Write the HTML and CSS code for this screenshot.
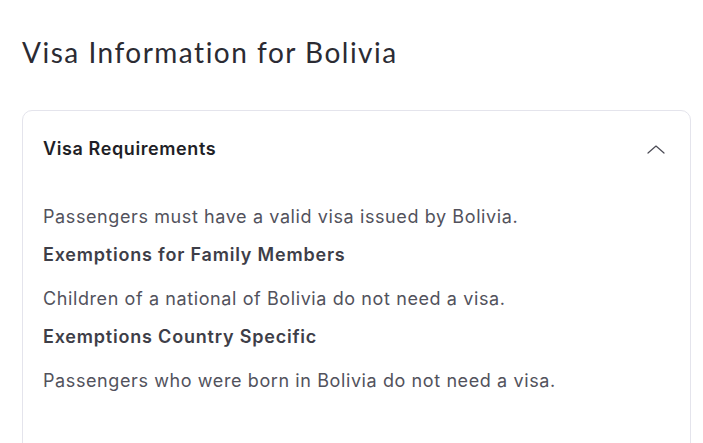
FILE: index.html
```html
<!DOCTYPE html>
<html lang="en">
<head>
    <meta charset="UTF-8">
    <title>Visa Information for Bolivia</title>
    <link rel="stylesheet" href="styles.css">
</head>
<body>
<div class="page">
    <h1 class="title">Visa Information for Bolivia</h1>
    <div class="card">
        <div class="card-head">
            <span class="card-title">Visa Requirements</span>
            <svg class="chevron" width="18" height="9" viewBox="0 0 18 9">
                <path d="M1 8 L9 1 L17 8" fill="none" stroke="#4b4b55" stroke-width="1.2" stroke-linecap="round" stroke-linejoin="round"/>
            </svg>
        </div>
        <div class="card-body">
            <p class="text">Passengers must have a valid visa issued by Bolivia.</p>
            <p class="sub">Exemptions for Family Members</p>
            <p class="text">Children of a national of Bolivia do not need a visa.</p>
            <p class="sub">Exemptions Country Specific</p>
            <p class="text">Passengers who were born in Bolivia do not need a visa.</p>
        </div>
    </div>
</div>
</body>
</html>
```

FILE: styles.css
```css
html, body { margin: 0; padding: 0; background: #fff; }
.page {
    padding: 30px 12px 0 22px;
}
.title {
    margin: 0 0 36px 0;
    font-family: Lato, "Open Sans", sans-serif;
    font-weight: 400;
    font-size: 28px;
    line-height: 44px;
    letter-spacing: 1.5px;
    font-variant-ligatures: none;
    color: #2b2b33;
}
.card {
    border: 1px solid #e4e4ec;
    border-radius: 10px;
    height: 400px;
}
.card-head {
    display: flex;
    align-items: center;
    justify-content: space-between;
    padding: 26px 25px 22px 20px;
}
.card-title {
    font-family: Inter, Roboto, sans-serif;
    font-weight: 600;
    font-size: 18px;
    line-height: 24px;
    letter-spacing: 0.6px;
    color: #1f1f27;
}
.card-body {
    padding: 22px 20px 0 20px;
}
.card-body p {
    margin: 0;
    font-family: Inter, Roboto, sans-serif;
    font-size: 18px;
    line-height: 24px;
}
.text {
    color: #52525c;
    letter-spacing: 0.6px;
    margin-bottom: 14px !important;
}
.sub {
    font-weight: 600;
    color: #3e3e48;
    letter-spacing: 0.8px;
    margin-bottom: 20px !important;
}
```
